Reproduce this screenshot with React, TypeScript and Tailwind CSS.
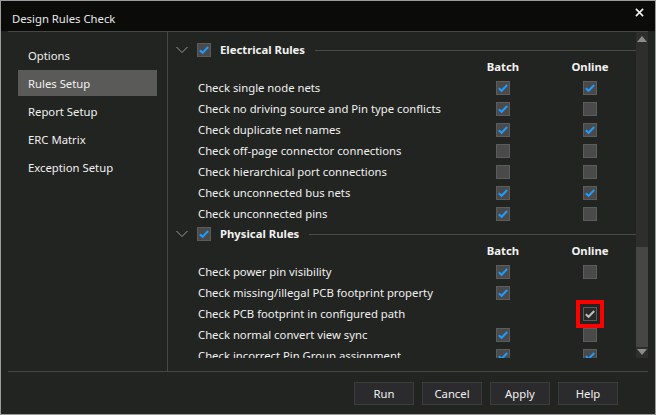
import React from 'react';

type Mark = 'on' | 'off' | 'none' | 'grey';

interface Rule {
  label: string;
  batch: Mark;
  online: Mark;
  highlight?: boolean;
}

const electrical: Rule[] = [
  { label: 'Check single node nets', batch: 'on', online: 'on' },
  { label: 'Check no driving source and Pin type conflicts', batch: 'on', online: 'off' },
  { label: 'Check duplicate net names', batch: 'on', online: 'on' },
  { label: 'Check off-page connector connections', batch: 'off', online: 'off' },
  { label: 'Check hierarchical port connections', batch: 'off', online: 'off' },
  { label: 'Check unconnected bus nets', batch: 'on', online: 'on' },
  { label: 'Check unconnected pins', batch: 'on', online: 'off' },
];

const physical: Rule[] = [
  { label: 'Check power pin visibility', batch: 'on', online: 'off' },
  { label: 'Check missing/illegal PCB footprint property', batch: 'on', online: 'none' },
  { label: 'Check PCB footprint in configured path', batch: 'none', online: 'grey', highlight: true },
  { label: 'Check normal convert view sync', batch: 'on', online: 'off' },
  { label: 'Check incorrect Pin Group assignment', batch: 'on', online: 'on' },
];

const navItems = ['Options', 'Rules Setup', 'Report Setup', 'ERC Matrix', 'Exception Setup'];

const CheckBox: React.FC<{ mark: Mark }> = ({ mark }) => {
  if (mark === 'none') return null;
  const grey = mark === 'grey';
  return (
    <span
      className={`flex h-[14px] w-[14px] items-center justify-center border ${
        grey ? 'border-[#5a5a5a] bg-[#272827]' : 'border-[#5c5c5c] bg-[#4a4a4a]'
      }`}
    >
      {mark !== 'off' && (
        <svg viewBox="0 0 12 12" className="h-[12px] w-[12px]">
          <path
            d="M1.8 6.2 L4.6 8.8 L10.2 3"
            fill="none"
            stroke={grey ? '#bdbdbd' : '#1e9bff'}
            strokeWidth="2"
          />
        </svg>
      )}
    </span>
  );
};

const Chevron = () => (
  <svg viewBox="0 0 12 8" className="h-[8px] w-[12px]">
    <path d="M0.5 1 L6 6.5 L11.5 1" fill="none" stroke="#9a9a9a" strokeWidth="1" />
  </svg>
);

const Section: React.FC<{ title: string; rules: Rule[]; first?: boolean }> = ({ title, rules, first }) => (
  <div className={first ? 'pt-[11px]' : 'pt-[3px]'}>
    <div className="flex h-[14px] items-center pl-[8px]">
      <Chevron />
      <span className="ml-[9px]">
        <CheckBox mark="on" />
      </span>
      <span className="ml-[9px] font-bold text-[#f2f2f2]">{title}</span>
      <span className="ml-[10px] h-px flex-1 bg-[#4a4a4a]" />
    </div>
    <div className="flex h-[20px] items-center justify-end gap-[27px] pr-[16px] font-bold text-[#f2f2f2]">
      <span className="w-[60px] text-center">Batch</span>
      <span className="w-[60px] text-center">Online</span>
    </div>
    {rules.map((r) => (
      <div key={r.label} className="flex h-[21px] items-center pr-[16px] pl-[30px]">
        <span className="flex-1 whitespace-nowrap text-[#f0f0f0]">{r.label}</span>
        <span className="flex w-[60px] justify-center">
          <CheckBox mark={r.batch} />
        </span>
        <span className="ml-[27px] flex w-[60px] justify-center">
          <span className="relative">
            <CheckBox mark={r.online} />
            {r.highlight && (
              <span className="absolute -top-[7px] -left-[7px] h-[28px] w-[28px] border-[4px] border-[#ff0000]" />
            )}
          </span>
        </span>
      </div>
    ))}
  </div>
);

const App: React.FC = () => {
  return (
    <div
      className="flex h-[415px] w-[656px] flex-col border border-[#9c9c9c] bg-[#222421] text-[11.3px] leading-none"
      style={{ fontFamily: '"Noto Sans", "Open Sans", sans-serif' }}
    >
      {/* Title bar */}
      <div className="flex h-[30px] shrink-0 items-center justify-between bg-[#0b0c0a] pr-[11px] pl-[11px]">
        <span className="mt-[5px] text-[#e8e8e8]">Design Rules Check</span>
        <svg viewBox="0 0 10 10" className="mb-[7px] h-[9px] w-[9px]">
          <path d="M1 1 L9 9 M9 1 L1 9" stroke="#f0f0f0" strokeWidth="1.8" />
        </svg>
      </div>

      {/* Main */}
      <div className="mx-[7px] flex h-[341px] shrink-0 border-t border-b border-[#464745]">
        <div className="flex w-[160px] shrink-0 flex-col gap-[2px] border-r border-[#464745] px-[10px] pt-[10px]">
          {navItems.map((n) => (
            <div
              key={n}
              className={`flex h-[26px] items-center pt-px pl-[10px] text-[#f0f0f0] ${
                n === 'Rules Setup' ? 'bg-[#5a5b59]' : ''
              }`}
            >
              {n}
            </div>
          ))}
        </div>

        <div className="flex flex-1 flex-col">
          <div className="flex h-[326px]">
            <div className="flex-1 overflow-hidden">
              <Section title="Electrical Rules" rules={electrical} first />
              <Section title="Physical Rules" rules={physical} />
            </div>
            {/* Scrollbar */}
            <div className="flex w-[12px] flex-col items-center bg-[#2e2f2d]">
              <svg viewBox="0 0 10 6" className="mt-[4px] h-[6px] w-[10px]">
                <path d="M0 6 L5 0 L10 6 Z" fill="#8c8c8c" />
              </svg>
              <div className="flex-1" />
              <div className="h-[100px] w-[12px] bg-[#464745]" />
              <svg viewBox="0 0 10 6" className="mt-[2px] mb-[3px] h-[6px] w-[10px]">
                <path d="M0 0 L10 0 L5 6 Z" fill="#8c8c8c" />
              </svg>
            </div>
          </div>
        </div>
      </div>

      {/* Footer */}
      <div className="flex flex-1 justify-end gap-[8px] pt-[10px] pr-[37px]">
        {['Run', 'Cancel', 'Apply', 'Help'].map((b) => (
          <button
            key={b}
            className="h-[23px] w-[60px] border border-[#3c3c3c] bg-[#2b2b2d] text-[#f0f0f0]"
          >
            {b}
          </button>
        ))}
      </div>
    </div>
  );
};

export default App;
